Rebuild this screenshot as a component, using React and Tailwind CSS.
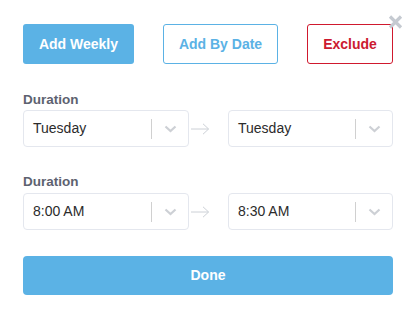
import React from "react";

function Chevron() {
  return (
    <svg width="13" height="8" viewBox="0 0 13 8" fill="none">
      <path d="M1.5 1.5 L6.5 6 L11.5 1.5" stroke="#cdd0d5" strokeWidth="2.2" />
    </svg>
  );
}

function Arrow() {
  return (
    <svg width="19" height="12" viewBox="0 0 19 12" fill="none">
      <path d="M0 6 H17.5 M12 0.8 L17.6 6 L12 11.2" stroke="#ccd0d6" strokeWidth="1" />
    </svg>
  );
}

function Select({ value, width }) {
  return (
    <div className={`flex h-[37px] flex-none items-center rounded-[4px] border border-[#e4e7ee] bg-white ${width}`}>
      <span className="flex-1 pl-[9px] text-[14px] text-[#2b2b2b]">{value}</span>
      <span className="h-[20px] w-px bg-[#d0d0d0]" />
      <span className="flex w-[36px] items-center justify-center">
        <Chevron />
      </span>
    </div>
  );
}

function Row({ from, to }) {
  return (
    <div className="flex items-center">
      <Select value={from} width="w-[166px]" />
      <span className="ml-[2px] flex">
        <Arrow />
      </span>
      <div className="ml-auto">
        <Select value={to} width="w-[165px]" />
      </div>
    </div>
  );
}

export default function App() {
  return (
    <div
      className="relative h-[319px] w-[417px] bg-white pl-[23px] pr-[24px] pt-[24px]"
      style={{ fontFamily: '"Liberation Sans", Arial, sans-serif' }}
    >
      {/* close */}
      <button className="absolute left-[388px] top-[15px]">
        <svg width="15" height="14" viewBox="0 0 15 14" fill="none">
          <path d="M2 1.5 L13 12.5 M13 1.5 L2 12.5" stroke="#c5cad1" strokeWidth="3.2" />
        </svg>
      </button>

      {/* mode buttons */}
      <div className="flex items-center justify-between">
        <button className="h-[40px] w-[111px] rounded-[3px] bg-[#5bb2e5] text-[14px] font-bold text-white">
          Add Weekly
        </button>
        <button className="h-[40px] w-[115px] rounded-[3px] border border-[#5bb2e5] bg-white text-[14px] font-bold text-[#5bb2e5]">
          Add By Date
        </button>
        <button className="h-[40px] w-[86px] rounded-[3px] border border-[#d0192e] bg-white text-[14px] font-bold text-[#cc1a30]">
          Exclude
        </button>
      </div>

      <div className="mt-[28px] mb-[2px] text-[13.5px] leading-[16px] font-bold text-[#5d6270]">Duration</div>
      <Row from="Tuesday" to="Tuesday" />

      <div className="mt-[27px] mb-[3px] text-[13.5px] leading-[16px] font-bold text-[#5d6270]">Duration</div>
      <Row from="8:00 AM" to="8:30 AM" />

      <button className="mt-[26px] h-[39px] w-full rounded-[4px] bg-[#5bb2e5] text-[14px] font-bold text-white">
        Done
      </button>
    </div>
  );
}
